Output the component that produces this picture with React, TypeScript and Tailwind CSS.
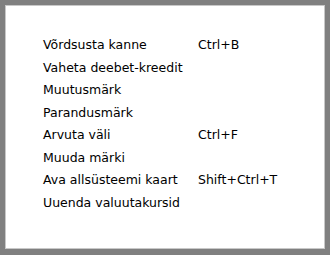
import React from "react";

const rows: [string, string][] = [
  ["Võrdsusta kanne", "Ctrl+B"],
  ["Vaheta deebet-kreedit", ""],
  ["Muutusmärk", ""],
  ["Parandusmärk", ""],
  ["Arvuta väli", "Ctrl+F"],
  ["Muuda märki", ""],
  ["Ava allsüsteemi kaart", "Shift+Ctrl+T"],
  ["Uuenda valuutakursid", ""],
];

export default function App() {
  return (
    <div className="w-[330px] h-[255px] bg-[#808080] pt-[5px] pl-[5px] pr-[5px] pb-[6px]">
      <div className="w-full h-full bg-white border border-[#c8c8c8] pt-[28px] pl-[37px] text-black text-[12.5px] leading-[22.5px]" style={{ fontFamily: '"DejaVu Sans", sans-serif' }}>
        {rows.map(([label, sc]) => (
          <div key={label} className="flex h-[22.5px] items-center">
            <span className="w-[155px] whitespace-nowrap">{label}</span>
            <span className="whitespace-nowrap">{sc}</span>
          </div>
        ))}
      </div>
    </div>
  );
}
